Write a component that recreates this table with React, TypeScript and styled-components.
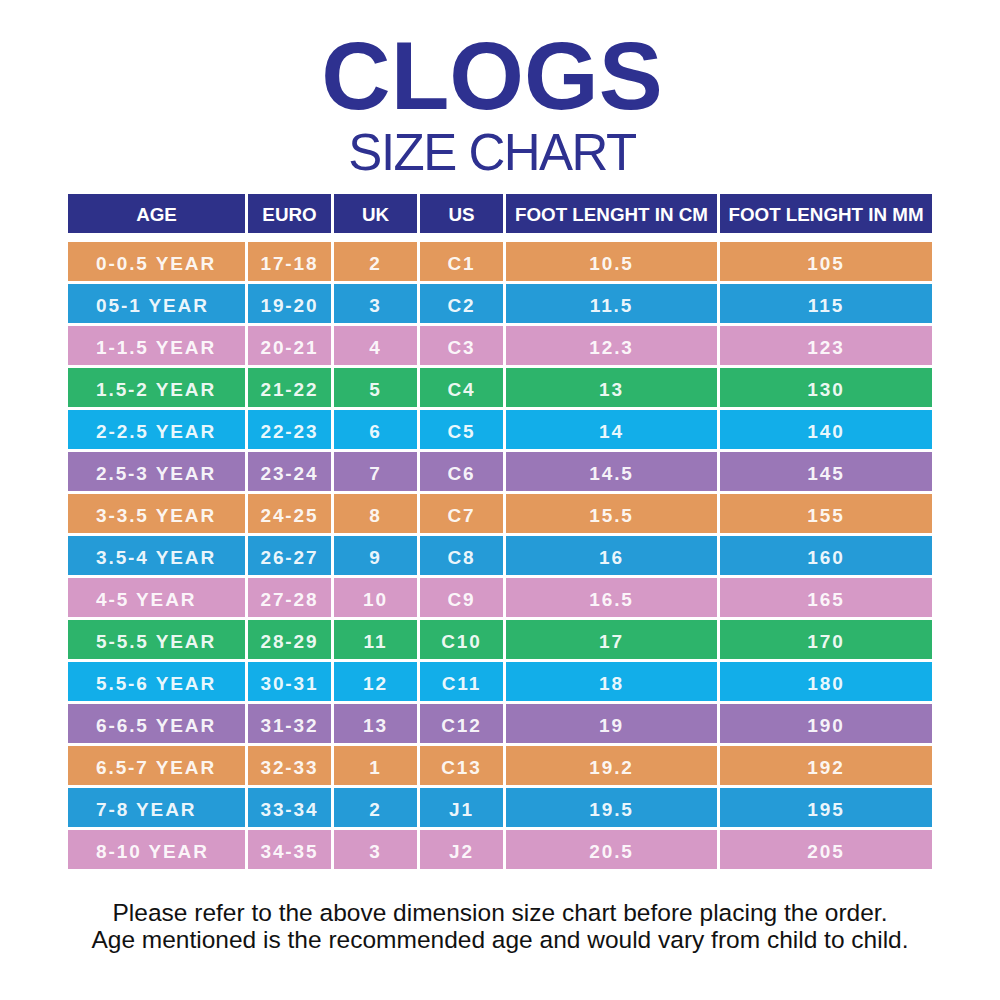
import React from "react";
import styled, { createGlobalStyle } from "styled-components";

const Global = createGlobalStyle`
  html, body { margin: 0; padding: 0; background: #ffffff; }
  body { font-family: "Liberation Sans", Arial, sans-serif; }
`;

const Page = styled.div`
  width: 1000px;
  height: 1000px;
  background: #ffffff;
  display: flex;
  flex-direction: column;
  align-items: center;
  padding-top: 28px;
  box-sizing: border-box;
`;

const TitleBlock = styled.div`
  display: flex;
  flex-direction: column;
  align-items: center;
  gap: 3px;
  margin-right: 16px;
`;

const Title = styled.h1`
  margin: 0;
  font-family: "Liberation Sans", Arial, sans-serif;
  font-weight: 700;
  font-size: 96px;
  line-height: 96px;
  color: #2e3190;
`;

const Subtitle = styled.h2`
  margin: 0;
  font-family: "Liberation Sans", Arial, sans-serif;
  font-weight: 400;
  font-size: 51px;
  line-height: 51px;
  letter-spacing: -1.5px;
  color: #2e3190;
`;

const Table = styled.div`
  margin-top: 16px;
  width: 864px;
  display: flex;
  flex-direction: column;
  gap: 3px;
`;

const Row = styled.div<{ $head?: boolean }>`
  display: grid;
  grid-template-columns: 177px 83px 83px 83px 211px 212px;
  column-gap: 3px;
  height: 39px;
  margin-bottom: ${(p) => (p.$head ? "6px" : "0")};
`;

const HeadCell = styled.div`
  background: #2e3189;
  color: #ffffff;
  font-weight: 700;
  font-size: 18.8px;
  display: flex;
  align-items: center;
  justify-content: center;
  padding-top: 3px;
  box-sizing: border-box;
  white-space: nowrap;
`;

const Cell = styled.div<{ $bg: string; $left?: boolean }>`
  background: ${(p) => p.$bg};
  color: rgba(255, 255, 255, 0.93);
  font-weight: 700;
  font-size: 19px;
  letter-spacing: 1.9px;
  display: flex;
  align-items: center;
  justify-content: ${(p) => (p.$left ? "flex-start" : "center")};
  padding-left: ${(p) => (p.$left ? "28px" : "0")};
  padding-top: 4px;
  box-sizing: border-box;
  white-space: nowrap;
`;

const Note = styled.p`
  margin: 30px 0 0;
  font-family: "Liberation Sans", Arial, sans-serif;
  font-size: 24.5px;
  line-height: 27px;
  color: #111111;
  text-align: center;
`;

const C = {
  orange: "#e3995c",
  blue: "#259bd7",
  pink: "#d699c6",
  green: "#2db46b",
  cyan: "#12aee9",
  purple: "#9a77b7",
};

const rows: [string, string, string, string, string, string, string][] = [
  ["0-0.5 YEAR", "17-18", "2", "C1", "10.5", "105", C.orange],
  ["05-1 YEAR", "19-20", "3", "C2", "11.5", "115", C.blue],
  ["1-1.5 YEAR", "20-21", "4", "C3", "12.3", "123", C.pink],
  ["1.5-2 YEAR", "21-22", "5", "C4", "13", "130", C.green],
  ["2-2.5 YEAR", "22-23", "6", "C5", "14", "140", C.cyan],
  ["2.5-3 YEAR", "23-24", "7", "C6", "14.5", "145", C.purple],
  ["3-3.5 YEAR", "24-25", "8", "C7", "15.5", "155", C.orange],
  ["3.5-4 YEAR", "26-27", "9", "C8", "16", "160", C.blue],
  ["4-5 YEAR", "27-28", "10", "C9", "16.5", "165", C.pink],
  ["5-5.5 YEAR", "28-29", "11", "C10", "17", "170", C.green],
  ["5.5-6 YEAR", "30-31", "12", "C11", "18", "180", C.cyan],
  ["6-6.5 YEAR", "31-32", "13", "C12", "19", "190", C.purple],
  ["6.5-7 YEAR", "32-33", "1", "C13", "19.2", "192", C.orange],
  ["7-8 YEAR", "33-34", "2", "J1", "19.5", "195", C.blue],
  ["8-10 YEAR", "34-35", "3", "J2", "20.5", "205", C.pink],
];

const headers = ["AGE", "EURO", "UK", "US", "FOOT LENGHT IN CM", "FOOT LENGHT IN MM"];

export default function App() {
  return (
    <>
      <Global />
      <Page>
        <TitleBlock>
          <Title>CLOGS</Title>
          <Subtitle>SIZE CHART</Subtitle>
        </TitleBlock>
        <Table>
          <Row $head>
            {headers.map((h) => (
              <HeadCell key={h}>{h}</HeadCell>
            ))}
          </Row>
          {rows.map((r) => (
            <Row key={r[0]}>
              {r.slice(0, 6).map((v, i) => (
                <Cell key={i} $bg={r[6]} $left={i === 0}>
                  {v}
                </Cell>
              ))}
            </Row>
          ))}
        </Table>
        <Note>
          Please refer to the above dimension size chart before placing the order.
          <br />
          Age mentioned is the recommended age and would vary from child to child.
        </Note>
      </Page>
    </>
  );
}
